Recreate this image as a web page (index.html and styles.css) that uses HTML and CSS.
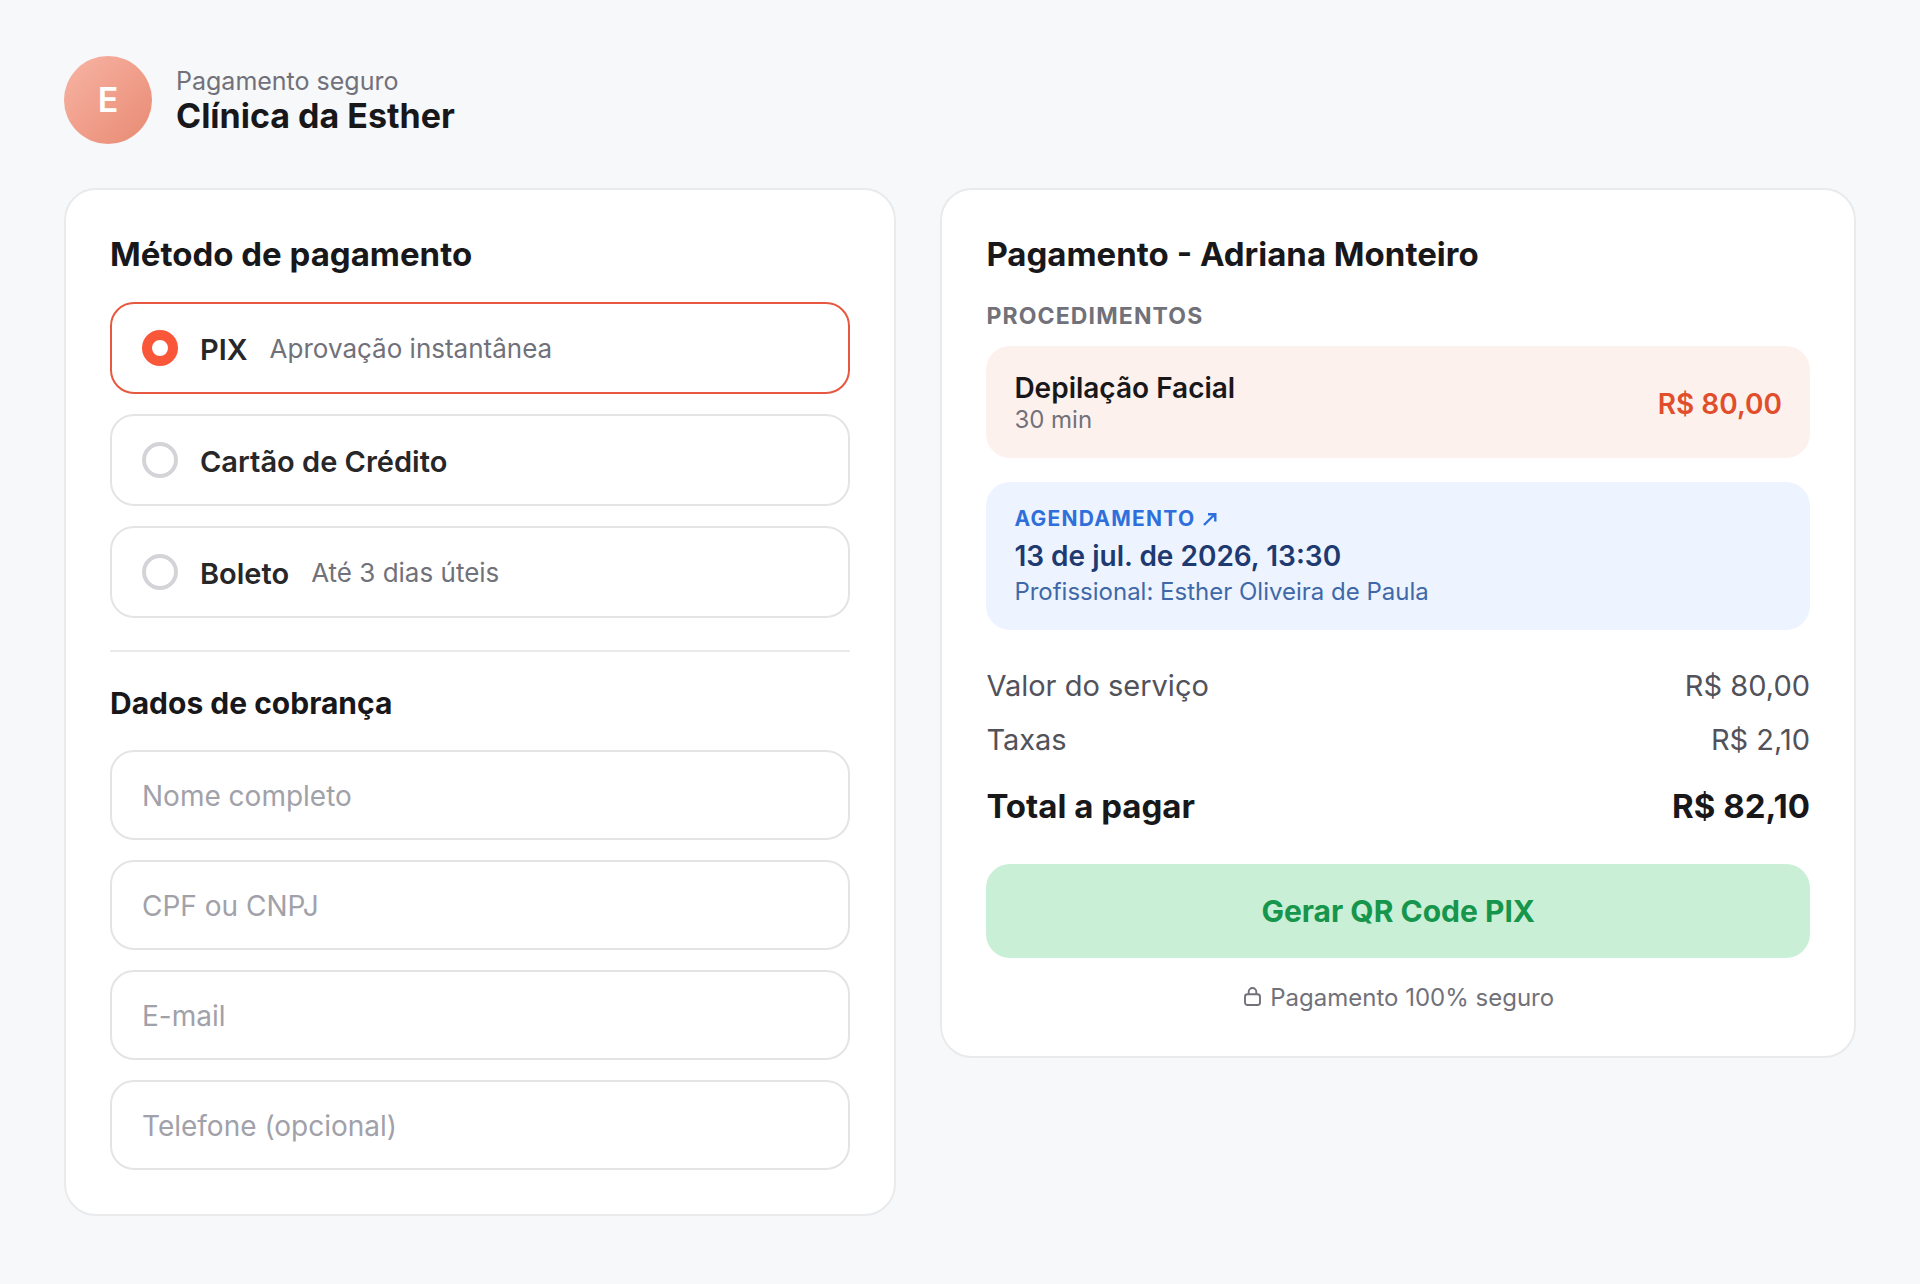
FILE: index.html
```html
<!DOCTYPE html>
<html lang="pt-BR">
    <head>
        <title>Pagamento seguro - Clínica da Esther</title>
        <meta charset="UTF-8">
        <link rel="stylesheet" href="styles.css">
    </head>

    <body>
        <header class="header">
            <div class="avatar">E</div>
            <div class="clinic">
                <span class="clinicLabel">Pagamento seguro</span>
                <h1 class="clinicName">Clínica da Esther</h1>
            </div>
        </header>

        <main class="checkout">
            <section class="card">
                <h2 class="cardTitle">Método de pagamento</h2>

                <div class="options">
                    <label class="option selected">
                        <input type="radio" name="method" class="radio" checked>
                        <span class="optionName">PIX</span>
                        <span class="optionHint">Aprovação instantânea</span>
                    </label>
                    <label class="option">
                        <input type="radio" name="method" class="radio">
                        <span class="optionName">Cartão de Crédito</span>
                    </label>
                    <label class="option">
                        <input type="radio" name="method" class="radio">
                        <span class="optionName">Boleto</span>
                        <span class="optionHint">Até 3 dias úteis</span>
                    </label>
                </div>

                <hr class="divider">

                <h3 class="formTitle">Dados de cobrança</h3>
                <form class="fields">
                    <input type="text" class="field" placeholder="Nome completo">
                    <input type="text" class="field" placeholder="CPF ou CNPJ">
                    <input type="email" class="field" placeholder="E-mail">
                    <input type="tel" class="field" placeholder="Telefone (opcional)">
                </form>
            </section>

            <section class="card">
                <h2 class="cardTitle summaryTitle">Pagamento - Adriana Monteiro</h2>
                <h4 class="sectionLabel">PROCEDIMENTOS</h4>

                <div class="procedure">
                    <div>
                        <div class="procedureName">Depilação Facial</div>
                        <div class="procedureTime">30 min</div>
                    </div>
                    <span class="procedurePrice">R$ 80,00</span>
                </div>

                <div class="booking">
                    <div class="bookingLabel">
                        <span>AGENDAMENTO</span>
                        <svg class="arrow" viewBox="0 0 14 14" fill="none" stroke="currentColor" stroke-width="2.4">
                            <path d="M1 13L10 4"/>
                            <path d="M5 2.2H12.3V9.5"/>
                            <path d="M8 2.5H12V6.5Z" fill="currentColor" stroke="none"/>
                        </svg>
                    </div>
                    <div class="bookingDate">13 de jul. de 2026, 13:30</div>
                    <div class="bookingStaff">Profissional: Esther Oliveira de Paula</div>
                </div>

                <div class="row"><span>Valor do serviço</span><span>R$ 80,00</span></div>
                <div class="row"><span>Taxas</span><span>R$ 2,10</span></div>
                <div class="row total"><span>Total a pagar</span><span>R$ 82,10</span></div>

                <button class="payButton">Gerar QR Code PIX</button>

                <div class="secure">
                    <svg class="lock" viewBox="0 0 17 19" fill="none" stroke="currentColor" stroke-width="1.9">
                        <rect x="1" y="7.3" width="15" height="10.7" rx="2.5"/>
                        <path d="M4.7 7.3V4.8a3.8 3.8 0 0 1 7.6 0V7.3"/>
                    </svg>
                    <span>Pagamento 100% seguro</span>
                </div>
            </section>
        </main>
    </body>
</html>
```
FILE: styles.css
```css
*
{
    box-sizing: border-box;
}

body
{
    margin: 0;
    padding: 56px 64px;
    background-color: #f7f8fa;
    color: #18181b;
    font-family: Inter, "Liberation Sans", sans-serif;
}

h1, h2, h3, h4
{
    margin: 0;
}

.header
{
    display: flex;
    align-items: center;
    gap: 24px;
    margin-bottom: 44px;
}

.avatar
{
    display: flex;
    align-items: center;
    justify-content: center;
    width: 88px;
    height: 88px;
    padding-bottom: 2px;
    border-radius: 50%;
    background: linear-gradient(135deg, #f8b4a4, #e88a73);
    color: white;
    font-size: 34px;
    font-weight: 600;
}

.clinicLabel
{
    display: block;
    padding-top: 2px;
    color: #71717a;
    font-size: 25px;
    line-height: 30px;
}

.clinicName
{
    font-size: 34px;
    font-weight: 700;
    line-height: 40px;
}

.checkout
{
    display: grid;
    grid-template-columns: 1fr 1.1fr;
    gap: 44px;
    align-items: start;
}

.card
{
    background-color: white;
    border: 2px solid #e9eaec;
    border-radius: 32px;
    padding: 44px;
}

.cardTitle
{
    font-size: 33px;
    font-weight: 700;
    line-height: 40px;
    margin-bottom: 28px;
}

.options, .fields
{
    display: flex;
    flex-direction: column;
    gap: 20px;
}

.option
{
    display: flex;
    align-items: center;
    height: 92px;
    padding: 0 30px;
    border: 2px solid #e4e4e7;
    border-radius: 24px;
}

.option.selected
{
    border-color: #e8573f;
}

.radio
{
    appearance: none;
    width: 36px;
    height: 36px;
    margin: 0 22px 0 0;
    border: 4px solid #d4d4d8;
    border-radius: 50%;
}

.radio:checked
{
    border: 10px solid #fa5639;
}

.optionName
{
    padding-top: 2px;
    color: #27272a;
    font-size: 29px;
    font-weight: 600;
}

.optionHint
{
    margin-left: 22px;
    color: #71717a;
    font-size: 26px;
}

.divider
{
    height: 2px;
    margin: 32px 0;
    border: none;
    background-color: #e9eaec;
}

.formTitle
{
    font-size: 30px;
    font-weight: 700;
    line-height: 38px;
    margin-bottom: 28px;
}

.field
{
    width: 100%;
    height: 90px;
    padding: 2px 30px 0;
    border: 2px solid #e4e4e7;
    border-radius: 24px;
    background-color: white;
    font-family: inherit;
    font-size: 28px;
}

.field::placeholder
{
    color: #a1a1aa;
}

.summaryTitle
{
    margin-bottom: 28px;
}

.sectionLabel
{
    color: #71717a;
    font-size: 23px;
    font-weight: 700;
    letter-spacing: 0.05em;
    line-height: 29px;
    margin-bottom: 15px;
}

.procedure
{
    display: flex;
    align-items: center;
    justify-content: space-between;
    height: 112px;
    padding: 0 28px;
    border-radius: 24px;
    background-color: #fdf1ee;
}

.procedureName
{
    font-size: 28px;
    font-weight: 600;
    line-height: 34px;
}

.procedureTime
{
    color: #71717a;
    font-size: 24px;
    line-height: 29px;
}

.procedurePrice
{
    padding-top: 4px;
    color: #e04e2b;
    font-size: 28px;
    font-weight: 600;
}

.booking
{
    height: 148px;
    margin: 24px 0 37px;
    padding: 23px 28px;
    border-radius: 24px;
    background-color: #edf4ff;
}

.bookingLabel
{
    display: flex;
    align-items: center;
    gap: 8px;
    color: #2f6fdb;
    font-size: 21px;
    font-weight: 700;
    letter-spacing: 0.06em;
    line-height: 28px;
}

.arrow
{
    width: 14px;
    height: 14px;
}

.bookingDate
{
    margin-top: 5px;
    color: #1e3a70;
    font-size: 28px;
    font-weight: 600;
    line-height: 36px;
}

.bookingStaff
{
    color: #4068a8;
    font-size: 24px;
    line-height: 36px;
}

.row
{
    display: flex;
    justify-content: space-between;
    color: #52525b;
    font-size: 29px;
    line-height: 38px;
    margin-bottom: 16px;
}

.row.total
{
    margin: 26px 0 37px;
    color: #18181b;
    font-size: 33px;
    font-weight: 700;
    line-height: 42px;
}

.payButton
{
    display: block;
    width: 100%;
    height: 94px;
    border: none;
    border-radius: 24px;
    background-color: #c9efd6;
    color: #16954c;
    font-family: inherit;
    font-size: 30px;
    font-weight: 700;
}

.secure
{
    display: flex;
    align-items: center;
    justify-content: center;
    gap: 9px;
    margin-top: 25px;
    padding-left: 2px;
    color: #71717a;
    font-size: 24px;
    line-height: 29px;
}

.lock
{
    width: 17px;
    height: 19px;
    margin-bottom: 2px;
}
```
